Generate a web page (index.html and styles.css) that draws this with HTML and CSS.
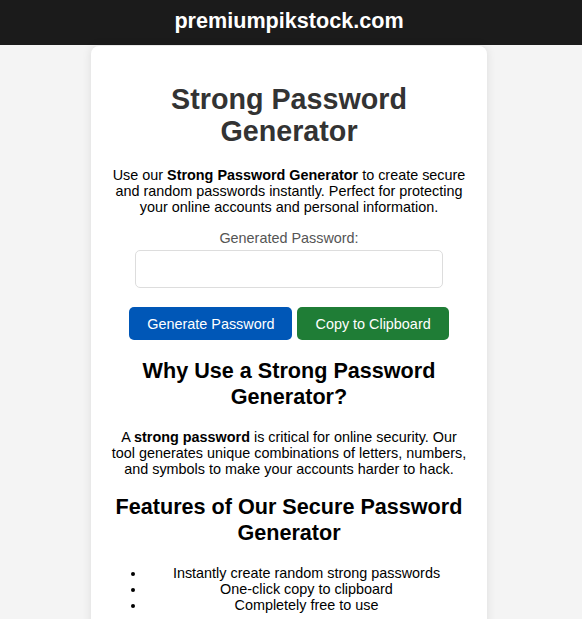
FILE: index.html
```html
<!DOCTYPE html>
<html lang="en">
<head>
<meta charset="utf-8">
<title>Strong Password Generator</title>
<link rel="stylesheet" href="styles.css">
</head>
<body>
<header class="site-header">premiumpikstock.com</header>
<div class="page">
  <main class="card">
    <h1 class="title">Strong Password Generator</h1>
    <p class="text intro">Use our <strong>Strong Password Generator</strong> to create secure and random passwords instantly. Perfect for protecting your online accounts and personal information.</p>
    <label class="label" for="pw">Generated Password:</label>
    <input class="pw-input" id="pw" type="text" readonly>
    <div class="actions">
      <button class="btn btn-blue" type="button">Generate Password</button>
      <button class="btn btn-green" type="button">Copy to Clipboard</button>
    </div>
    <h2 class="section-title why">Why Use a Strong Password Generator?</h2>
    <p class="text why-text">A <strong>strong password</strong> is critical for online security. Our tool generates unique combinations of letters, numbers, and symbols to make your accounts harder to hack.</p>
    <h3 class="section-title features-title">Features of Our Secure Password Generator</h3>
    <ul class="features">
      <li>Instantly create random strong passwords</li>
      <li>One-click copy to clipboard</li>
      <li>Completely free to use</li>
    </ul>
  </main>
</div>
</body>
</html>
```
FILE: styles.css
```css
html, body {
  margin: 0;
  padding: 0;
}
body {
  background: #f4f4f4;
  font-family: "Liberation Sans", Arial, sans-serif;
  font-size: 14.4px;
  line-height: 16px;
  color: #000;
}
.site-header {
  background: #1b1b1b;
  color: #fff;
  font-weight: bold;
  font-size: 21.6px;
  line-height: 25px;
  height: 45px;
  box-sizing: border-box;
  padding: 0 4px 4px 0;
  display: flex;
  align-items: center;
  justify-content: center;
}
.page {
  padding-right: 4px;
  padding-top: 1px;
}
.card {
  width: 396px;
  box-sizing: border-box;
  margin: 0 auto;
  background: #fff;
  border-radius: 8px;
  box-shadow: 0 0 10px rgba(0, 0, 0, 0.1);
  padding: 20px;
  text-align: center;
  display: flow-root;
}
.title {
  font-size: 28.7px;
  line-height: 32px;
  color: #333;
  margin: 17px 0 20px;
}
.text {
  margin: 0;
}
.intro {
  margin-bottom: 15px;
}
.label {
  display: block;
  color: #555;
  margin-bottom: 4px;
}
.pw-input {
  display: block;
  width: 308px;
  height: 38px;
  box-sizing: border-box;
  margin: 0 auto;
  padding: 10px;
  border: 1px solid #ddd;
  border-radius: 5px;
  font-family: inherit;
  font-size: 14px;
}
.actions {
  display: flex;
  justify-content: center;
  gap: 5px;
  margin-top: 19px;
}
.btn {
  border: none;
  border-radius: 5px;
  color: #fff;
  font-family: inherit;
  font-size: 14.4px;
  line-height: 16px;
  padding: 0 18px;
  height: 33px;
  cursor: pointer;
}
.btn-blue {
  background: #0057b7;
}
.btn-green {
  background: #1f7d36;
}
.section-title {
  font-size: 21.6px;
  line-height: 26px;
  margin: 0;
}
.why {
  margin: 18px 0 19px;
}
.why-text {
  margin-bottom: 17px;
}
.features-title {
  margin-bottom: 19px;
}
.features {
  margin: 0;
  padding: 0 0 0 35px;
}
```
